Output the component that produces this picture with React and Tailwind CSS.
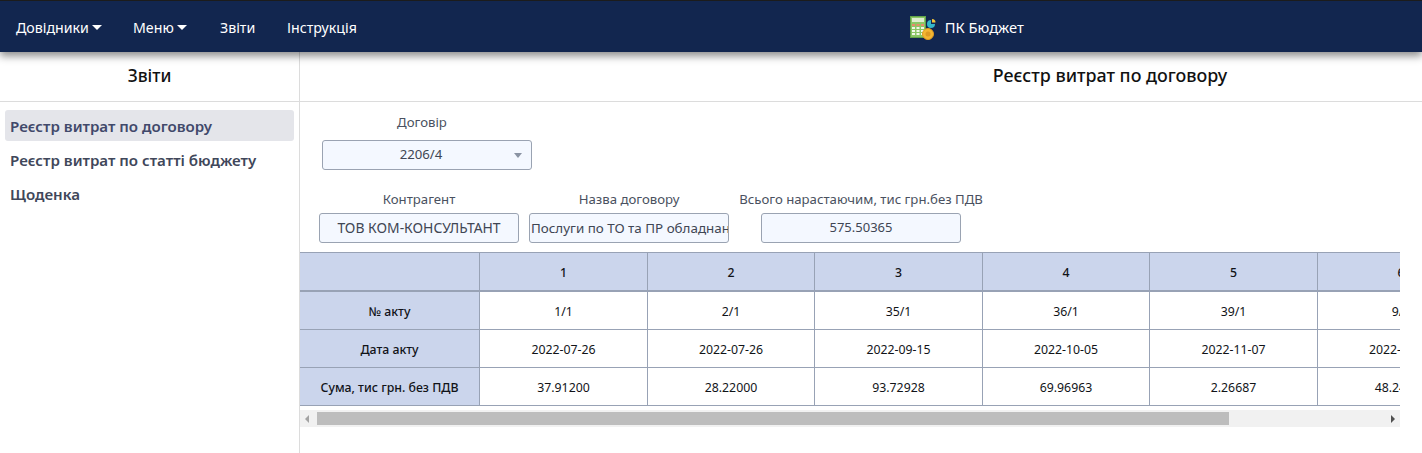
const F = { fontFamily: '"Noto Sans", "Open Sans", sans-serif' };
const cols = [
  ["1", "1/1", "2022-07-26", "37.91200"],
  ["2", "2/1", "2022-07-26", "28.22000"],
  ["3", "35/1", "2022-09-15", "93.72928"],
  ["4", "36/1", "2022-10-05", "69.96963"],
  ["5", "39/1", "2022-11-07", "2.26687"],
  ["6", "9/1", "2022-12-01", "48.24000"],
];
const rowHeads = ["№ акту", "Дата акту", "Сума, тис грн. без ПДВ"];

function Caret() {
  return <span className="inline-block ml-[3px] mt-[1px] w-0 h-0 border-x-[5px] border-x-transparent border-t-[5px] border-t-white" />;
}

function CalcIcon() {
  return (
    <svg width="26" height="25" viewBox="0 0 26 25" className="shrink-0">
      <rect x="0.5" y="1.5" width="15" height="21" fill="#8bc766" stroke="#62a34a" />
      <rect x="2" y="3" width="12" height="4" fill="#dfeecf" />
      <rect x="2" y="9" width="3" height="2" fill="#e98a6b" />
      <rect x="6.5" y="9" width="3" height="2" fill="#e98a6b" />
      <rect x="11" y="9" width="3" height="2" fill="#e98a6b" />
      {[12, 15, 18].map((y) => [2, 6.5, 11].map((x) => <rect key={x + "-" + y} x={x} y={y} width="3" height="2" fill="#f1f8e8" />))}
      <circle cx="21" cy="9" r="4" fill="#35b6c9" />
      <path d="M21 9 L21 5 A4 4 0 0 1 25 9 Z" fill="#12264f" />
      <path d="M22 4 A3.5 3.5 0 0 1 25.5 7.5 L22 7.5 Z" fill="#f3c43a" />
      <circle cx="18" cy="19" r="5.5" fill="#f2b632" stroke="#e09a20" />
      <circle cx="18" cy="19" r="2.5" fill="#dd9a24" />
    </svg>
  );
}

function Box({ w, children, center = true, size = "text-[13.9px]" }) {
  return (
    <div className={`${w} h-[30px] shrink-0 bg-[#f4f8ff] border border-[#9aa3b2] rounded-[3px] flex items-center overflow-hidden whitespace-nowrap ${size} text-[#3f4654] ${center ? "justify-center" : "pl-[1px]"}`}>
      {children}
    </div>
  );
}

function Cell({ children, head, bold, thick, w }) {
  return (
    <div className={`${w} shrink-0 h-[38px] flex items-center justify-center pt-[3px] whitespace-nowrap border-r border-b border-[#98a2b5] text-[12.3px] ${head ? "bg-[#cbd5ec]" : "bg-white"} ${bold ? "font-medium" : ""} ${thick ? "border-b-2 h-[39px]" : ""} text-[#111318]`}>
      {children}
    </div>
  );
}

export default function App() {
  return (
    <div style={F} className="w-[1422px] h-[453px] overflow-hidden bg-white flex flex-col">
      <header className="h-[52px] shrink-0 bg-[#12264f] border-t border-t-[#1c1c1c] flex items-center relative z-10 shadow-[0_4px_8px_rgba(0,0,0,0.45)] text-white text-[14.2px]">
        <nav className="flex items-center pl-[16px] pt-[2px]">
          <span className="flex items-center w-[117px]">Довідники<Caret /></span>
          <span className="flex items-center w-[87px]">Меню<Caret /></span>
          <span className="w-[67px]">Звіти</span>
          <span>Інструкція</span>
        </nav>
        <div className="ml-[553px] flex items-center gap-[9px] text-[14.7px] pt-[1px]">
          <CalcIcon />
          <span className="pt-[1px]">ПК Бюджет</span>
        </div>
      </header>
      <div className="flex flex-1 min-h-0">
        <aside className="w-[300px] shrink-0 border-r border-[#dcdcdc]">
          <div className="h-[50px] border-b border-[#dcdcdc] flex items-center justify-center pb-[2px] text-[17.2px] font-medium text-[#111]">Звіти</div>
          <div className="px-[5px] pt-[8px] text-[15.1px] font-semibold text-[#40475a] flex flex-col gap-[3px]">
            <div className="h-[31px] bg-[#e4e5ea] rounded-[3px] flex items-center px-[5px] pt-[2px] text-[#41496b]">Реєстр витрат по договору</div>
            <div className="h-[31px] flex items-center px-[5px] pt-[2px]">Реєстр витрат по статті бюджету</div>
            <div className="h-[31px] flex items-center px-[5px] pt-[2px]">Щоденка</div>
          </div>
        </aside>
        <main className="flex-1 min-w-0 flex flex-col">
          <div className="h-[50px] shrink-0 border-b border-[#dcdcdc] flex items-center justify-center pl-[498px] pb-[2px] text-[17.85px] font-medium text-[#111] whitespace-nowrap">Реєстр витрат по договору</div>
          <div className="pl-[22px] pt-[10px] text-[#4a5160] text-[13.2px]">
            <div className="w-[200px] text-center h-[28px] leading-[20px]">Договір</div>
            <div className="w-[210px] h-[30px] bg-[#f4f8ff] border border-[#9aa3b2] rounded-[3px] flex items-center relative justify-center pr-[12px] text-[#3f4654]">
              2206/4
              <span className="absolute right-[9px] top-[12px] w-0 h-0 border-x-[4px] border-x-transparent border-t-[5px] border-t-[#8a93a3]" />
            </div>
          </div>
          <div className="pl-[19px] pt-[19px] flex text-[13.2px] text-[#4a5160]">
            <div className="w-[200px] mr-[10px]">
              <div className="h-[24px] text-center leading-[20px]">Контрагент</div>
              <Box w="w-[200px]">ТОВ КОМ-КОНСУЛЬТАНТ</Box>
            </div>
            <div className="w-[200px] mr-[32px]">
              <div className="h-[24px] text-center leading-[20px]">Назва договору</div>
              <Box w="w-[200px]" center={false} size="text-[13.4px]">Послуги по ТО та ПР обладнан</Box>
            </div>
            <div className="w-[200px] flex flex-col items-center">
              <div className="h-[24px] text-center leading-[20px] whitespace-nowrap">Всього нарастаючим, тис грн.без ПДВ</div>
              <Box w="w-[200px]" size="text-[13px]">575.50365</Box>
            </div>
          </div>
          <div className="w-[1100px]">
            <div className="mt-[9px] overflow-hidden">
              <div className="flex w-max border-t border-[#98a2b5]">
                <div className="flex flex-col">
                  <Cell head thick w="w-[180px]" />
                  {rowHeads.map((r) => <Cell key={r} head bold w="w-[180px]">{r}</Cell>)}
                </div>
                {cols.map((c, i) => (
                  <div key={c[0]} className={`flex flex-col ${i % 2 === 0 ? "w-[168px]" : "w-[167px]"}`}>
                    <Cell head bold thick w="w-full">{c[0]}</Cell>
                    <Cell w="w-full">{c[1]}</Cell>
                    <Cell w="w-full">{c[2]}</Cell>
                    <Cell w="w-full">{c[3]}</Cell>
                  </div>
                ))}
              </div>
            </div>
            <div className="mt-[4px] h-[17px] bg-[#f1f1f1] flex items-center shrink-0">
              <span className="ml-[5px] w-0 h-0 border-y-[4px] border-y-transparent border-r-[4px] border-r-[#a3a3a3]" />
              <div className="ml-[8px] w-[912px] h-[13px] bg-[#bdbdbd]" />
              <span className="ml-auto mr-[5px] w-0 h-0 border-y-[4px] border-y-transparent border-l-[4px] border-l-[#505050]" />
            </div>
          </div>
        </main>
      </div>
    </div>
  );
}
